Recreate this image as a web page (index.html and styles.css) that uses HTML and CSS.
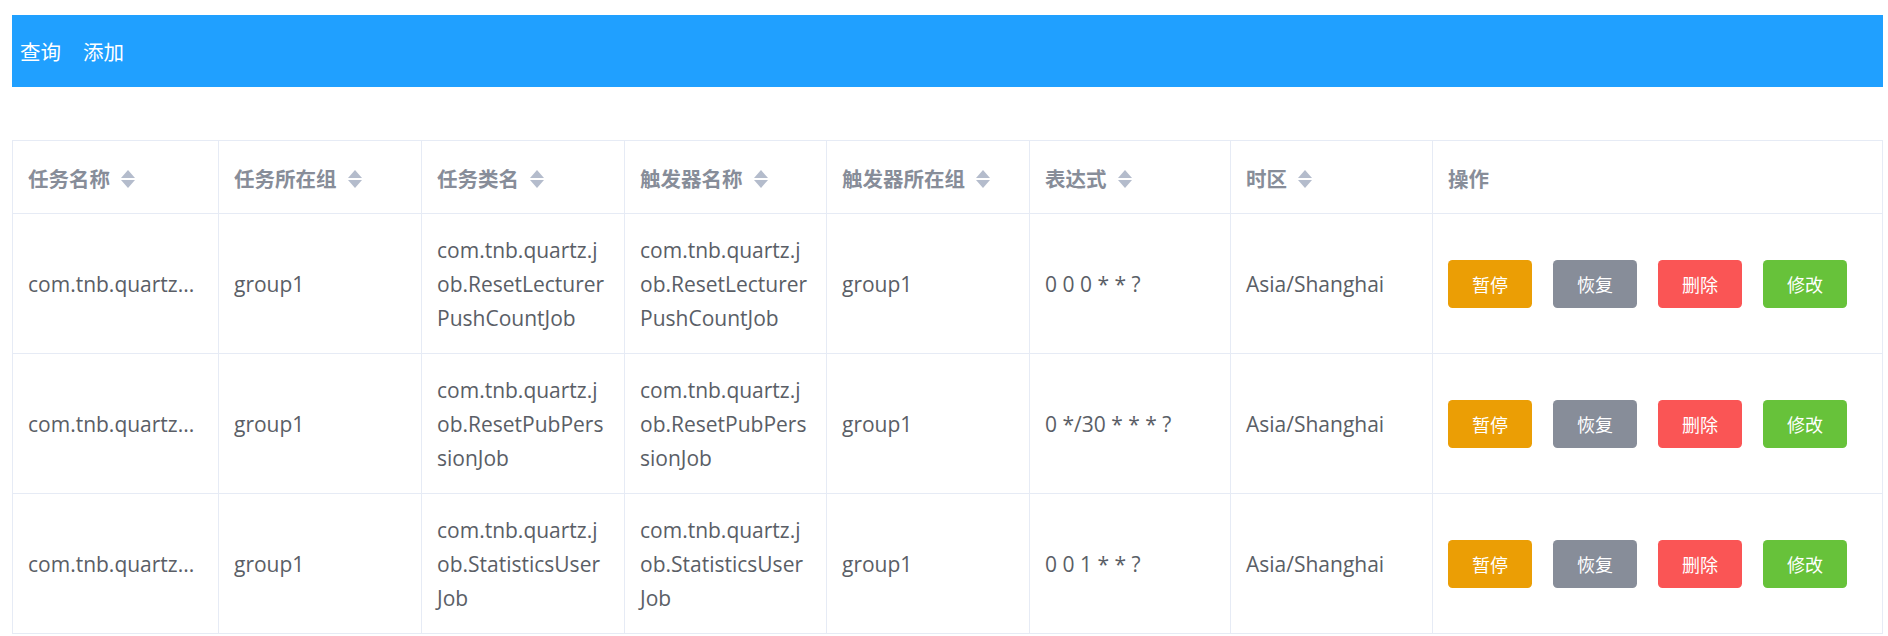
FILE: index.html
```html
<!DOCTYPE html>
<html lang="zh-CN">
<head>
<meta charset="utf-8">
<title>任务管理</title>
<link rel="stylesheet" href="styles.css">
</head>
<body>
<div class="page">
  <nav class="topbar">
    <span class="nav-item">查询</span>
    <span class="nav-item">添加</span>
  </nav>
  <table class="jobs">
    <colgroup>
      <col class="c1"><col class="c2"><col class="c3"><col class="c4"><col class="c5"><col class="c6"><col class="c7"><col class="c8">
    </colgroup>
    <thead>
      <tr>
        <th><span class="th-label">任务名称</span><span class="caret"><i class="up"></i><i class="down"></i></span></th>
        <th><span class="th-label">任务所在组</span><span class="caret"><i class="up"></i><i class="down"></i></span></th>
        <th><span class="th-label">任务类名</span><span class="caret"><i class="up"></i><i class="down"></i></span></th>
        <th><span class="th-label">触发器名称</span><span class="caret"><i class="up"></i><i class="down"></i></span></th>
        <th><span class="th-label">触发器所在组</span><span class="caret"><i class="up"></i><i class="down"></i></span></th>
        <th><span class="th-label">表达式</span><span class="caret"><i class="up"></i><i class="down"></i></span></th>
        <th><span class="th-label">时区</span><span class="caret"><i class="up"></i><i class="down"></i></span></th>
        <th><span class="th-label">操作</span></th>
      </tr>
    </thead>
    <tbody>
      <tr>
        <td>com.tnb.quartz...</td>
        <td>group1</td>
        <td>com.tnb.quartz.j<br>ob.ResetLecturer<br>PushCountJob</td>
        <td>com.tnb.quartz.j<br>ob.ResetLecturer<br>PushCountJob</td>
        <td>group1</td>
        <td>0 0 0 * * ?</td>
        <td>Asia/Shanghai</td>
        <td><div class="ops"><button class="btn warning">暂停</button><button class="btn info">恢复</button><button class="btn danger">删除</button><button class="btn success">修改</button></div></td>
      </tr>
      <tr>
        <td>com.tnb.quartz...</td>
        <td>group1</td>
        <td>com.tnb.quartz.j<br>ob.ResetPubPers<br>sionJob</td>
        <td>com.tnb.quartz.j<br>ob.ResetPubPers<br>sionJob</td>
        <td>group1</td>
        <td>0 */30 * * * ?</td>
        <td>Asia/Shanghai</td>
        <td><div class="ops"><button class="btn warning">暂停</button><button class="btn info">恢复</button><button class="btn danger">删除</button><button class="btn success">修改</button></div></td>
      </tr>
      <tr>
        <td>com.tnb.quartz...</td>
        <td>group1</td>
        <td>com.tnb.quartz.j<br>ob.StatisticsUser<br>Job</td>
        <td>com.tnb.quartz.j<br>ob.StatisticsUser<br>Job</td>
        <td>group1</td>
        <td>0 0 1 * * ?</td>
        <td>Asia/Shanghai</td>
        <td><div class="ops"><button class="btn warning">暂停</button><button class="btn info">恢复</button><button class="btn danger">删除</button><button class="btn success">修改</button></div></td>
      </tr>
    </tbody>
  </table>
</div>
</body>
</html>
```

FILE: styles.css
```css
html, body {
  margin: 0;
  padding: 0;
  background: #fff;
}
body {
  font-family: "Open Sans", "Noto Sans CJK SC", sans-serif;
  font-size: 21px;
  color: #5a5e66;
}
.page {
  width: 1871px;
  margin: 0 0 0 12px;
  padding-top: 15px;
}
.topbar {
  height: 72px;
  background: #20a0ff;
  display: flex;
  align-items: center;
  gap: 22px;
  padding-left: 8px;
  box-sizing: border-box;
}
.nav-item {
  color: #fff;
  font-family: "Noto Sans CJK SC", sans-serif;
  font-size: 20.5px;
  line-height: 1;
}
.jobs {
  margin-top: 53px;
  width: 1871px;
  table-layout: fixed;
  border-collapse: separate;
  border-spacing: 0;
  border-top: 1px solid #e6ebf5;
  border-left: 1px solid #e6ebf5;
}
.c1 { width: 206px; }
.c2 { width: 203px; }
.c3 { width: 203px; }
.c4 { width: 202px; }
.c5 { width: 203px; }
.c6 { width: 201px; }
.c7 { width: 202px; }
.c8 { width: 450px; }
.jobs th, .jobs td {
  border-right: 1px solid #e6ebf5;
  border-bottom: 1px solid #e6ebf5;
  text-align: left;
  vertical-align: middle;
  padding: 0 10px 0 15px;
  line-height: 34px;
  white-space: nowrap;
  overflow: hidden;
}
.jobs th {
  height: 73px;
  box-sizing: border-box;
  padding-top: 0;
  padding-bottom: 0;
  color: #878d99;
  font-weight: 700;
  font-family: "Noto Sans CJK SC", sans-serif;
  font-size: 20.5px;
}
.th-label {
  vertical-align: middle;
}
.caret {
  display: inline-flex;
  flex-direction: column;
  gap: 2px;
  margin-left: 11px;
  vertical-align: middle;
}
.caret i {
  display: block;
  width: 0;
  height: 0;
  border-left: 7px solid transparent;
  border-right: 7px solid transparent;
}
.caret .up {
  border-bottom: 8px solid #b4bccc;
}
.caret .down {
  border-top: 8px solid #b4bccc;
}
.jobs td {
  height: 140px;
  box-sizing: border-box;
  padding-top: 18px;
  padding-bottom: 18px;
}
.ops {
  display: flex;
  gap: 21px;
  align-items: center;
}
.btn {
  width: 84px;
  height: 48px;
  border: none;
  border-radius: 4.5px;
  color: #fff;
  font-family: "Noto Sans CJK SC", sans-serif;
  font-size: 18px;
  line-height: 48px;
  padding: 0;
  margin: 0;
  cursor: pointer;
}
.btn.warning { background: #eb9e05; }
.btn.info { background: #878d99; }
.btn.danger { background: #fa5555; }
.btn.success { background: #67c23a; }
```
